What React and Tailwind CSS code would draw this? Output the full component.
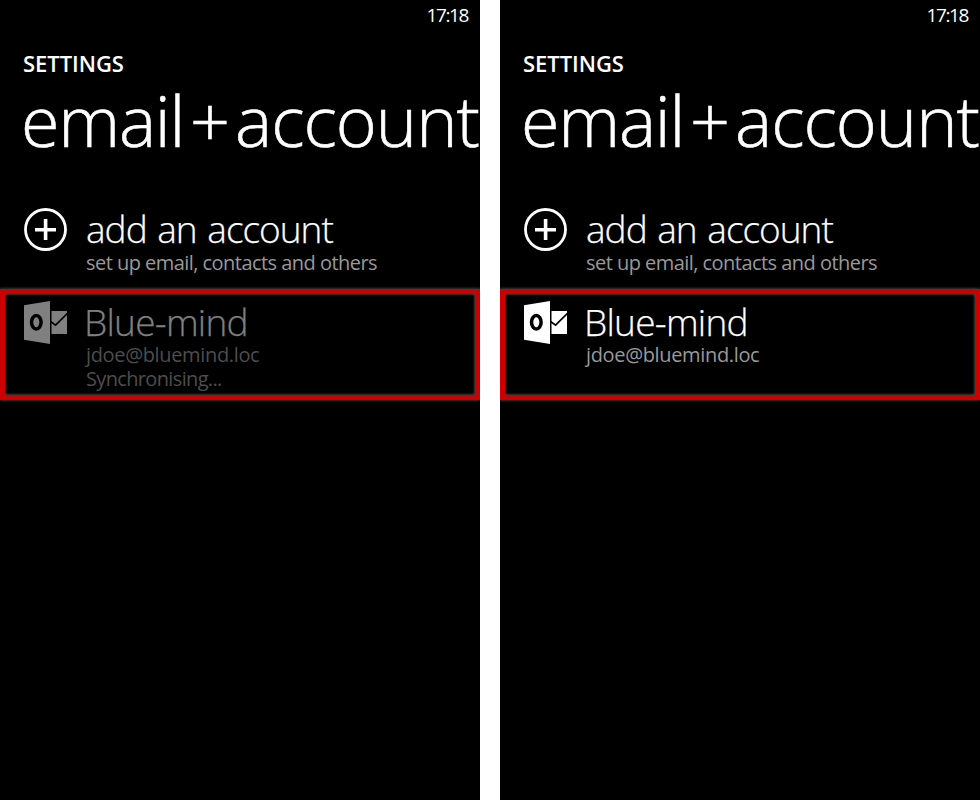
function AddIcon() {
  return (
    <svg className="block h-[44px] w-[44px] shrink-0" viewBox="0 0 44 44" fill="none" stroke="#fff">
      <circle cx="21.5" cy="21.5" r="20" strokeWidth="2.8" />
      <path d="M11 21.7h21M21.6 11v21" strokeWidth="3.6" />
    </svg>
  );
}

function OutlookIcon({ className }) {
  return (
    <svg className={`block h-[44px] w-[44px] shrink-0 ${className}`} viewBox="0 0 44 44">
      <path d="M0 4.3L26 0V43L0 38.7Z" fill="currentColor" />
      <ellipse cx="12.3" cy="21.2" rx="4.8" ry="6.7" fill="none" stroke="#000" strokeWidth="3.5" />
      <path d="M27.5 10H43V33H27.5Z" fill="currentColor" />
      <path d="M26.5 20.5L31.6 24.2L43.5 12.3" fill="none" stroke="#000" strokeWidth="1.7" />
    </svg>
  );
}

function Phone({ syncing }) {
  return (
    <section className="h-[800px] w-[480px] overflow-hidden bg-black text-white">
      <div className="flex h-[48px] justify-end pr-[12px] text-[19px] leading-[30px] tracking-[-1.4px]">
        17:18
      </div>
      <h2 className="h-[32px] pl-[23px] text-[22px] leading-[30px] font-semibold tracking-[-0.05px]">SETTINGS</h2>
      <h1 className="h-[80px] pl-[21px] text-[70px] leading-[80px] font-light whitespace-nowrap [-webkit-text-stroke:0.6px_#fff]">
        <span className="tracking-[-1.2px]">email</span>
        <span className="mr-[5px] ml-[6px]">+</span>
        <span className="tracking-[-0.95px]">account</span>
      </h1>
      <div className="flex h-[129px] gap-[18px] pt-[48px] pl-[24px]">
        <AddIcon />
        <div>
          <div className="h-[43px] text-[37px] leading-[42px] font-light tracking-[-1px] [word-spacing:2px] whitespace-nowrap [-webkit-text-stroke:0.25px_currentColor]">
            add an account
          </div>
          <div className="h-[24px] text-[20px] leading-[24px] tracking-[-0.54px] whitespace-nowrap text-[#999]">
            set up email, contacts and others
          </div>
        </div>
      </div>
      <div className="flex h-[111px] gap-[18px] border-[5px] border-[#cc0000] pt-[7px] pl-[19px] shadow-[0_0_3px_#66665a,inset_0_0_3px_#77776a]">
        <OutlookIcon className={syncing ? "text-[#808080]" : "text-white"} />
        <div className={syncing ? "text-[#4d4d4d]" : "text-[#999]"}>
          <div className={`-ml-[2px] h-[42px] text-[37px] leading-[42px] font-light tracking-[-0.75px] whitespace-nowrap [-webkit-text-stroke:0.25px_currentColor] ${syncing ? "text-[#808080]" : "text-white"}`}>
            Blue-mind
          </div>
          <div className="h-[24px] text-[20px] leading-[24px] tracking-[-0.35px] whitespace-nowrap">jdoe@bluemind.loc</div>
          {syncing && (
            <div className="h-[24px] text-[20px] leading-[24px] tracking-[-0.65px] whitespace-nowrap">Synchronising...</div>
          )}
        </div>
      </div>
    </section>
  );
}

export default function App() {
  return (
    <main className="flex h-[800px] w-[980px] gap-5 overflow-hidden bg-white font-['Open_Sans','Noto_Sans',sans-serif]">
      <Phone syncing />
      <Phone />
    </main>
  );
}
